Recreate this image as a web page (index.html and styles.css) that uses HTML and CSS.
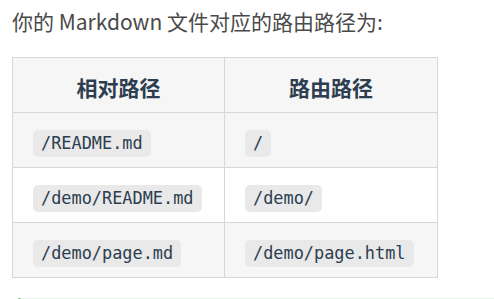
FILE: index.html
```html
<!DOCTYPE html>
<html lang="zh-CN">
<head>
<meta charset="utf-8">
<link rel="stylesheet" href="styles.css">
</head>
<body>
<div class="content">
  <p class="intro">你的 Markdown 文件对应的路由路径为:</p>
  <table class="routes">
    <colgroup><col class="c1"><col class="c2"></colgroup>
    <thead>
      <tr><th>相对路径</th><th>路由路径</th></tr>
    </thead>
    <tbody>
      <tr class="alt"><td><code>/README.md</code></td><td><code>/</code></td></tr>
      <tr><td><code>/demo/README.md</code></td><td><code>/demo/</code></td></tr>
      <tr class="alt"><td><code>/demo/page.md</code></td><td><code>/demo/page.html</code></td></tr>
    </tbody>
  </table>
  <div class="tip"></div>
</div>
</body>
</html>
```
FILE: styles.css
```css
html, body {
  margin: 0;
  padding: 0;
  background: #fff;
}
.content {
  padding: 0 0 0 12px;
  font-family: "Noto Sans CJK SC", "Noto Sans", sans-serif;
  color: #444;
}
.intro {
  margin: 0;
  padding-top: 6px;
  font-size: 21px;
  line-height: 30px;
  color: #4a4a4a;
}
.routes {
  margin-top: 21px;
  border-collapse: collapse;
  table-layout: fixed;
  width: 426px;
}
.c1 { width: 212px; }
.c2 { width: 213px; }
.routes th, .routes td {
  border: 1px solid #d3d8e0;
  height: 55px;
  padding: 0 20px;
  box-sizing: border-box;
}
.routes th {
  background: #f6f6f6;
  font-size: 21px;
  font-weight: 700;
  color: #2c3e50;
  text-align: center;
  padding-top: 4px;
}
.routes td {
  text-align: left;
  padding-top: 7px;
}
.routes tr.alt td {
  background: #f6f6f6;
}
.routes code {
  display: inline-block;
  font-family: "DejaVu Sans Mono", "Liberation Mono", monospace;
  font-size: 16.9px;
  line-height: 27px;
  padding: 0 8px;
  background: #e9e9e9;
  border-radius: 5px;
  color: #2c3e50;
}
.tip {
  margin-top: 20px;
  margin-left: 3px;
  height: 8px;
  background: #e8f6ea;
  border-left: 4px solid #1f9d3a;
  border-radius: 6px 0 0 0;
}
```
